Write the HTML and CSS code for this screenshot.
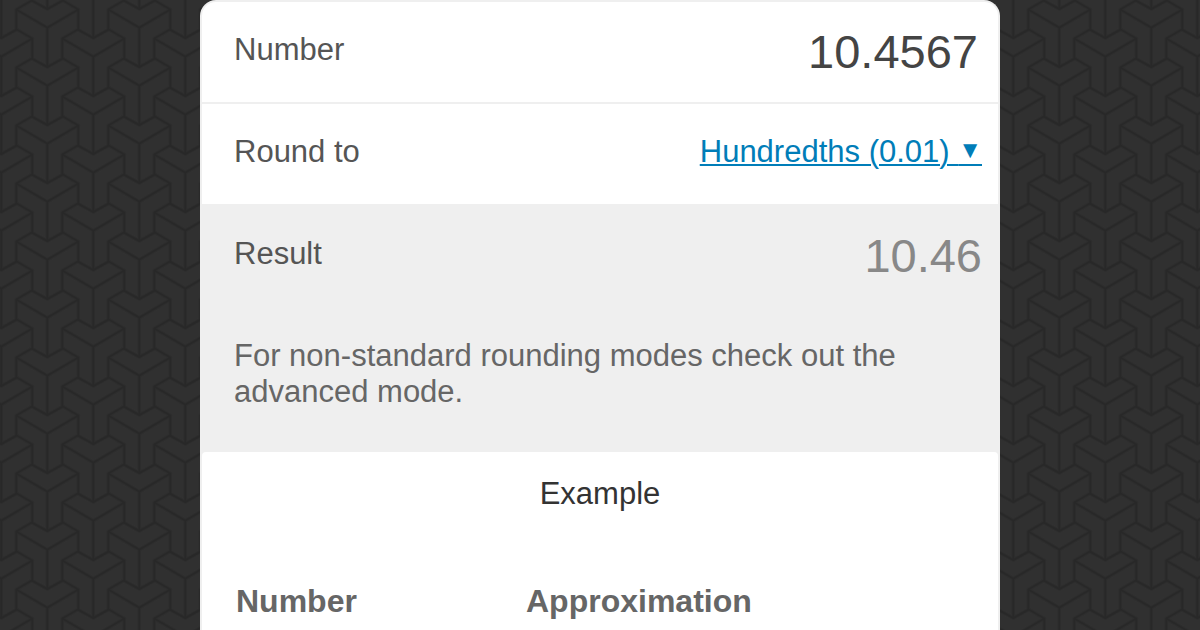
FILE: index.html
```html
<!DOCTYPE html>
<html lang="en">
<head>
<meta charset="utf-8">
<meta name="viewport" content="width=device-width, initial-scale=1">
<title>Rounding calculator</title>
<link rel="stylesheet" href="styles.css">
</head>
<body>
<main class="card">
  <form class="calculator">
    <div class="row">
      <label class="label" for="number">Number</label>
      <input class="number" id="number" type="text" inputmode="decimal" value="10.4567">
    </div>
    <div class="row row-divided">
      <span class="label">Round to</span>
      <a class="picker" href="#precision">Hundredths (0.01) <span class="arrow">▼</span></a>
    </div>
    <div class="result">
      <div class="row">
        <label class="label" for="result">Result</label>
        <output class="output" id="result" for="number">10.46</output>
      </div>
      <p class="hint">For non-standard rounding modes check out the advanced mode.</p>
    </div>
  </form>
  <section class="example">
    <h2 class="title">Example</h2>
    <table class="table">
      <thead>
        <tr><th class="col-number" scope="col">Number</th><th scope="col">Approximation</th></tr>
      </thead>
    </table>
  </section>
</main>
</body>
</html>
```
FILE: styles.css
```css
* {
  box-sizing: border-box;
}

body {
  margin: 0;
  background-color: #303030;
  background-image: url("data:image/svg+xml,%3Csvg xmlns='http://www.w3.org/2000/svg' xmlns:xlink='http://www.w3.org/1999/xlink' width='92' height='58'%3E%3Cdefs%3E%3Cpath id='a' d='M-31 9.5L-15.5.5L0 9L15.5.5L31 9.5L0 27.7L-31 9.5V29M31 9.5V29M0 27.7V67'/%3E%3Cg id='b'%3E%3Cuse xlink:href='%23a' y='-58'/%3E%3Cuse xlink:href='%23a'/%3E%3Cuse xlink:href='%23a' y='58'/%3E%3C/g%3E%3Cg id='c'%3E%3Cuse xlink:href='%23b' x='47.3'/%3E%3Cuse xlink:href='%23b' x='1.3' y='-29'/%3E%3Cuse xlink:href='%23b' x='93.3' y='-29'/%3E%3C/g%3E%3C/defs%3E%3Cg fill='none' stroke-linejoin='round'%3E%3Cuse xlink:href='%23c' stroke='%232d2d2d' stroke-width='4'/%3E%3Cuse xlink:href='%23c' stroke='%23282828' stroke-width='2'/%3E%3C/g%3E%3C/svg%3E");
  color: #555;
  font: 31px/36px "Liberation Sans", Arial, sans-serif;
}

.card {
  width: 100%;
  max-width: 800px;
  height: 100vh;
  margin: 0 auto;
  overflow: hidden;
  border: 2px solid #efefef;
  border-bottom: 0;
  border-radius: 16px 16px 0 0;
  background: #efefef;
}

.row {
  display: flex;
  align-items: baseline;
  justify-content: space-between;
  height: 100px;
  padding: 20px 16px 0 32px;
  background: #fff;
}

.row-divided {
  height: 102px;
  padding-top: 30px;
  border-top: 2px solid #efefef;
}

.number,
.output {
  font-size: 47px;
  line-height: 60px;
}

.number {
  flex: 1;
  min-width: 0;
  height: 60px;
  padding: 0 4px 0 0;
  border: 0;
  outline: 0;
  background: transparent;
  color: #444;
  font-family: inherit;
  text-align: right;
}

.label {
  align-self: flex-start;
  padding-top: 10px;
}

.row-divided .label {
  padding-top: 0;
}

.picker {
  color: #007db8;
  text-decoration-thickness: 2px;
  text-underline-offset: 2px;
  white-space: nowrap;
}

.arrow {
  font-size: 24px;
  line-height: 20px;
  vertical-align: 4px;
}

.result .row {
  padding-top: 22px;
  background: transparent;
}

.output {
  color: #888;
}

.hint {
  margin: 0;
  padding: 34px 32px 42px;
  color: #666;
}

.example {
  min-height: 100%;
  padding: 24px 32px;
  border-radius: 4px 4px 0 0;
  background: #fff;
}

.title {
  margin: 0 0 69px;
  color: #333;
  font-size: 31px;
  font-weight: normal;
  text-align: center;
}

.table {
  width: 100%;
  border-spacing: 2px;
  color: #666;
  font-size: 32px;
  text-align: left;
}

.table th {
  padding: 0;
}

.col-number {
  width: 288px;
}
```
